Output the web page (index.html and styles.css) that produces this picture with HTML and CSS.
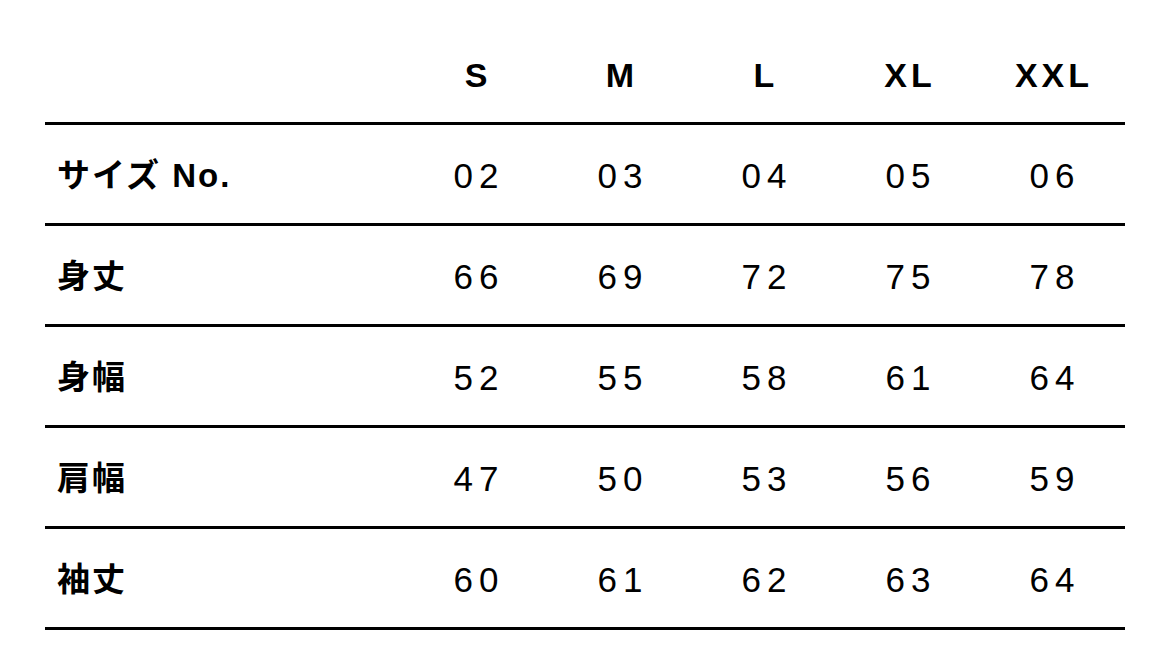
FILE: index.html
```html
<!DOCTYPE html>
<html lang="ja">
<head>
<meta charset="utf-8">
<link rel="stylesheet" href="styles.css">
</head>
<body>
<div class="size-table">
  <div class="row head">
    <div class="label"></div>
    <div class="cell">S</div>
    <div class="cell">M</div>
    <div class="cell">L</div>
    <div class="cell">XL</div>
    <div class="cell">XXL</div>
  </div>
  <div class="row">
    <div class="label">サイズ No.</div>
    <div class="cell">02</div>
    <div class="cell">03</div>
    <div class="cell">04</div>
    <div class="cell">05</div>
    <div class="cell">06</div>
  </div>
  <div class="row">
    <div class="label">身丈</div>
    <div class="cell">66</div>
    <div class="cell">69</div>
    <div class="cell">72</div>
    <div class="cell">75</div>
    <div class="cell">78</div>
  </div>
  <div class="row">
    <div class="label">身幅</div>
    <div class="cell">52</div>
    <div class="cell">55</div>
    <div class="cell">58</div>
    <div class="cell">61</div>
    <div class="cell">64</div>
  </div>
  <div class="row">
    <div class="label">肩幅</div>
    <div class="cell">47</div>
    <div class="cell">50</div>
    <div class="cell">53</div>
    <div class="cell">56</div>
    <div class="cell">59</div>
  </div>
  <div class="row">
    <div class="label">袖丈</div>
    <div class="cell">60</div>
    <div class="cell">61</div>
    <div class="cell">62</div>
    <div class="cell">63</div>
    <div class="cell">64</div>
  </div>
</div>
</body>
</html>
```
FILE: styles.css
```css
html, body {
  margin: 0;
  padding: 0;
  background: #ffffff;
}

body {
  color: #000000;
  font-family: "Liberation Sans", "Noto Sans CJK JP", sans-serif;
}

.size-table {
  width: 1080px;
  margin: 24px 0 0 45px;
}

.row {
  display: grid;
  grid-template-columns: 359px repeat(5, 144px);
  align-items: center;
  height: 98px;
  border-bottom: 3px solid #000000;
}

.label {
  padding-left: 12px;
  padding-top: 3px;
  font-family: "Liberation Sans", "Noto Sans CJK JP", sans-serif;
  font-weight: 700;
  font-size: 33px;
  letter-spacing: 2px;
  line-height: 1;
}

.cell {
  text-align: center;
  font-size: 35px;
  line-height: 1;
  letter-spacing: 6px;
  padding-left: 6px;
  padding-top: 2px;
}

.head .cell {
  font-weight: 700;
  font-size: 34px;
  letter-spacing: 4px;
  padding-left: 4px;
  padding-top: 4px;
}
```
